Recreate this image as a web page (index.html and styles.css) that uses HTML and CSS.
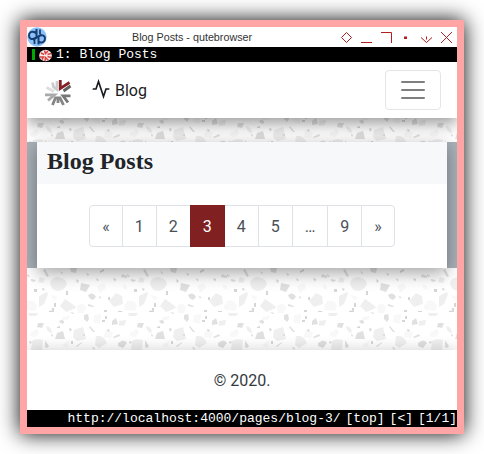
FILE: index.html
```html
<!DOCTYPE html>
<html lang="en">
<head>
<meta charset="utf-8">
<title>Blog Posts</title>
<link rel="stylesheet" href="styles.css">
</head>
<body>
<div class="window">
  <header class="titlebar">
    <svg class="app-icon" width="20" height="20" viewBox="0 0 20 20">
      <circle cx="10" cy="10" r="9.700" fill="#8fc1f8"/>
      <g fill="none" stroke="#153f73" stroke-width="2">
        <path d="M9.500 2V10.500L7.500 11.500C4.500 13 2 11.500 2 8.500C2 5.500 4.500 4 7 5L9 6"/>
        <path d="M11.500 17.500V9.500L13 8.500C15.500 7.500 18 9 18 11.500C18 14.500 15.500 16 13.500 15.500L11.500 14.500"/>
        <path d="M13 2.500V7M7.500 12.500V17" stroke-width="1.800"/>
        <path d="M6 13L14.500 7.500" stroke-width="1.500"/>
      </g>
    </svg>
    <span class="title">Blog Posts - qutebrowser</span>
    <svg class="controls" width="120" height="20" viewBox="0 0 120 20" fill="none" stroke="#b51e1e" stroke-width="1">
      <path d="M9.500 5.500L14.500 10.500L9.500 15.500L4.500 10.500Z"/>
      <path d="M24 15.500H35M44 5.500H54.500V16"/>
      <path d="M67 9.500h3v2.500h-3z" fill="#b51e1e" stroke="none"/>
      <path d="M84 10.500L89.500 15.500L95 10.500M89.500 9.500V12.500"/>
      <path d="M104 5L115 16M115 5L104 16"/>
    </svg>
  </header>
  <div class="tabbar">
    <span class="tab-mark"></span>
    <svg class="favicon" width="13" height="13" viewBox="0 0 13 13">
      <ellipse cx="6.500" cy="6.500" rx="6.300" ry="5.800" fill="#fbe9e9"/>
      <g fill="none" stroke="#d84040" stroke-width="1.500"><path d="M2 4L5 5.500M5.500 1.500L6.500 4.500L9 2M8.500 5.500L12 4.500M1 8H4.500L3 10.500M6 12L6.500 8.500L9.500 11.500M8.500 7.500L12 8.500"/></g>
    </svg>
    <span>1: Blog Posts</span>
  </div>
  <main class="page">
    <nav class="navbar">
      <svg class="brand-logo" width="30" height="30" viewBox="0 0 30 30" fill="none" stroke-width="2.800">
        <path d="M14 4V12.500L10.500 10L9.500 5.500" stroke="#ccc"/>
        <path d="M3.500 10.500L11 14.500" stroke="#dedede"/>
        <path d="M17.300 3V11.500L26.500 5.500" stroke="#852024"/>
        <path d="M20.500 14L27.500 9" stroke="#606060"/>
        <path d="M2 17.800H11.500L5 23.500" stroke="#aaa"/>
        <path d="M9.500 28L12.500 20.800H17L20.500 28M15 22V26" stroke="#858585"/>
        <path d="M27.500 18.800H20L25 25.500" stroke="#777"/>
      </svg>
      <svg class="pulse" width="20" height="20" viewBox="0 0 24 24" fill="none" stroke="#191b1e" stroke-width="2"><path d="M22 12h-4l-3 9L9 3l-3 9H2"/></svg>
      <span class="brand">Blog</span>
      <button class="toggler" aria-label="Menu"><svg width="30" height="30" viewBox="0 0 30 30" stroke="#808080" stroke-width="2" stroke-linecap="round"><path d="M4 7h22M4 15h22M4 23h22"/></svg></button>
    </nav>
    <svg class="stones upper" width="430" height="24" viewBox="0 50 430 24">
      <defs>
        <pattern id="terrazzo" width="100" height="100" patternUnits="userSpaceOnUse">
          <g fill="#efefef">
            <path d="M23 15Q24 10 31 9Q40 11 40 16Q37 23 31 23Q24 22 23 15Z"/>
            <path d="M12 28L20 24L21 26L17 36L12 39Z"/>
            <path d="M38 31L48 38L49 40L39 44L33 38Z"/>
            <path d="M82 33L89 25L95 28L96 36L87 39Z"/>
            <path d="M11 14L13 9L18 11L16 15Z"/>
            <path d="M47 62L56 59L59 71L50 73L46 69Z"/>
            <path d="M5 73Q9 70 16 72L15 82H4Z"/>
            <path d="M69 68Q76 66 80 75L72 80L68 77Z"/>
            <path d="M1 45H11L9 48L2 48ZM19 58Q25 59 25 65Q20 65 19 58ZM92 53L99 52L98 57L92 58Z"/>
          </g>
          <g fill="#f8f8f8">
            <path d="M0 33Q8 31 10 38L8 43L0 42ZM50 38L55 35L59 39L57 45H51ZM36 76L43 72L41 79L37 79ZM67 47L74 46L73 56L66 54Z"/>
            <path d="M97 38L100 34V43L97 41ZM3 65L10 61L12 65L8 69L3 68ZM70 18L77 15L79 20L73 25ZM35 49L43 48L41 52H35ZM78 62L86 64L84 70L77 69ZM24 27L31 29L28 32L25 30ZM96 16L100 18V22L96 20Z"/>
          </g>
          <g fill="#e0e0e0">
            <path d="M54 15L63 17L59 24L53 22ZM61 27Q66 23 69 29L66 32Q62 31 61 27ZM57 47L61 46L62 51L60 54L57 51ZM11 55L17 55L15 60L10 59ZM32 53Q37 50 37 55Q34 57 32 53ZM30 65L36 63L38 71H28ZM18 72L22 78L20 80L18 79ZM85 53L89 50L91 56L85 57ZM91 75Q97 70 100 75L96 80L91 78Z"/>
            <path d="M43 0H50L49 5L44 4ZM95 6L100 8V10L94 9ZM4 11L9 12L7 14L4 13ZM0 6L3 8L2 9L0 8ZM49 78L55 74L55 75L50 79ZM16 2L18 1L22 8L20 9ZM63 58L68 64L66 64L62 59ZM61 36L67 38L66 39L61 38ZM86 69L92 66L93 68L87 70Z"/>
          </g>
          <g fill="#d6d6d6">
            <path d="M7 21h3v3h-3zM15 20l3 1-2 2zM39 23h2v4h-2zM49 11l3 2-2 2zM27 35h2v4h-2zM22 43l5-1v2h-5zM25 40h2v2h-2zM43 44l4 1-1 1zM30 59l3-1v2h-3zM42 60l3 1-2 3zM44 73h2v3h-2zM65 79l3 1-1 2zM75 52h3v2h-3zM78 48h2v3h-2zM80 61l3 1-2 2zM72 28l2 1-1 2zM81 29h2v3h-2zM77 42h3v2h-3zM91 43h4v1h-4zM69 10l3 2-2 1zM86 10l3 1-1 3zM73 3l4-2v2l-4 2zM59 5l3 1-1 2zM33 3l3 2-1 1zM55 67l3-1v2zM24 66l2 1-1 2zM2 73l3 1-2 2z"/>
          </g>
        </pattern>
      </defs>
      <rect y="50" width="430" height="24" fill="url(#terrazzo)"/>
    </svg>
    <section class="band">
      <article class="card">
        <h1>Blog Posts</h1>
        <div class="pager">
          <span>«</span><span>1</span><span>2</span><span class="active">3</span><span>4</span><span>5</span><span>…</span><span>9</span><span>»</span>
        </div>
      </article>
    </section>
    <svg class="stones lower" width="430" height="82" viewBox="0 0 430 82"><rect width="430" height="82" fill="url(#terrazzo)"/></svg>
    <footer>© 2020.</footer>
  </main>
  <div class="statusbar"><span>http://localhost:4000/pages/blog-3/</span><span>[top]</span><span>[&lt;]</span><span>[1/1]</span></div>
</div>
</body>
</html>
```
FILE: styles.css
```css
* { box-sizing: border-box; }
body { margin: 0; background: #fff; overflow: hidden; font-family: Roboto, sans-serif; }
.window { width: 444px; height: 414px; margin: 20px; border: 7px solid #ffa5a5; background: #fff; box-shadow: 0 0 20px rgba(0,0,0,.98); display: flex; flex-direction: column; }
.titlebar { height: 20px; display: flex; align-items: center; background: #fff; }
.title { flex: 1; margin-left: 85px; font: 10.75px/20px "Liberation Sans", sans-serif; color: #333; white-space: nowrap; }
.tabbar { height: 15px; background: #000; color: #fff; display: flex; align-items: center; font: 13px/15px "Liberation Mono", monospace; }
.tab-mark { width: 3px; height: 11px; margin: 0 4px 0 5px; background: #00aa00; }
.favicon { margin: 1px 4px 0 0; }
.page { height: 348px; display: flex; flex-direction: column; overflow: hidden; }
.navbar { height: 56px; flex: none; display: flex; align-items: center; padding: 0 16px; background: #fff; box-shadow: 0 6px 14px rgba(0,0,0,.38); position: relative; z-index: 2; }
.brand-logo { margin-top: 4px; }
.pulse { margin: -3px 4px 0 18px; }
.brand { font-size: 16px; color: #191b1e; }
.toggler { width: 56px; height: 40px; margin-left: auto; padding: 0; display: grid; place-items: center; background: none; border: 1px solid #e5e5e5; border-radius: 4px; }
.stones { flex: none; display: block; background-color: #fff; }
.upper { height: 24px; }
.lower { height: 82px; }
.band { height: 126px; flex: none; padding: 0 10px; background: #a8b0b8; }
.card { height: 126px; position: relative; z-index: 3; background: #fff; box-shadow: 0 5px 16px rgba(0,0,0,.36); }
h1 { margin: 0; height: 42px; padding-left: 10px; background: #f7f8fa; color: #212529; font: bold 24px/39px "Liberation Serif", serif; }
.pager { display: flex; justify-content: center; padding-top: 21px; }
.pager span { height: 42px; padding: 0 12px; margin-left: -1px; border: 1px solid #dee2e6; line-height: 41px; font-size: 16px; color: #495057; }
.pager span:first-child { margin-left: 0; border-radius: 4px 0 0 4px; }
.pager span:last-child { border-radius: 0 4px 4px 0; }
.pager .active { position: relative; z-index: 1; background: #802020; border-color: #802020; color: #fff; }
footer { height: 60px; flex: none; background: #fff; text-align: center; font-size: 16px; line-height: 62px; color: #343a40; position: relative; z-index: 4; box-shadow: 0 -2px 12px rgba(0,0,0,.15); }
.statusbar { height: 17px; background: #000; color: #fff; display: flex; justify-content: flex-end; gap: 5px; font: 13px/17px "Liberation Mono", monospace; white-space: pre; }
```
